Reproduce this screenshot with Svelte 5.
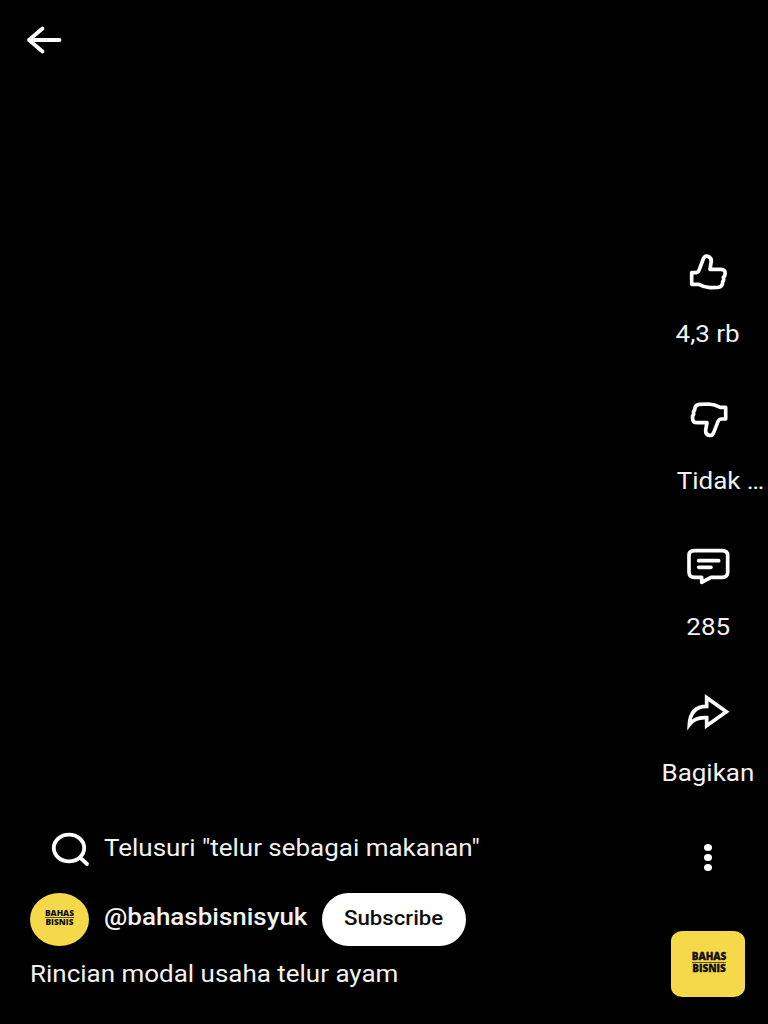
<script lang="ts">
    type IconName = "like" | "dislike" | "comment" | "share";

    const actions: { icon: IconName, label: string, viewBox: string }[] = [
        { icon: "like", label: "4,3 rb", viewBox: "72 30 144 132" },
        { icon: "dislike", label: "Tidak …", viewBox: "72 21 144 132" },
        { icon: "comment", label: "285", viewBox: "72 24 144 132" },
        { icon: "share", label: "Bagikan", viewBox: "102 30 144 132" },
    ];

    const paths: Record<IconName, string> = {
        like: "M95 98H108Q114 98 117 91L131 54Q135 46 143 49Q157 54 153 69L150 88H183Q197 89 195 101Q196 108 190 112Q193 120 188 125Q188 141 174 142L150 143Q131 141 116 133H95Z",
        dislike: "M197 52H181Q164 43 146 42L118 43Q104 45 104 60Q99 64 101 73Q96 78 98 87Q98 98 112 98H141L137 120Q136 135 149 136Q156 138 160 130L174 95Q177 87 184 87H197Z",
        comment: "M103 47H187Q203 47 203 62V111Q203 127 187 127H153L125 142V127H103Q87 127 87 111V62Q87 47 103 47Z",
        share: "M170 53V79C138 79 120 98 118 134C130 118 146 111 170 113V137L229 95Z",
    };
</script>

<main class="player">
    <header>
        <button class="back" aria-label="Kembali">
            <svg width="40" height="32" viewBox="0 0 40 32">
                <path d="M18.5 4.5L5 16L18.5 27.5M5 16H35.5" />
            </svg>
        </button>
    </header>

    <section class="info">
        <a class="search" href="#search">
            <svg width="42" height="38" viewBox="0 0 42 38">
                <ellipse cx="18" cy="16" rx="15.2" ry="13.4" />
                <path d="M29 25.5L36 32" />
            </svg>
            <span class="wide">Telusuri "telur sebagai makanan"</span>
        </a>
        <div class="channel">
            <div class="avatar"><span>BAHAS</span><span>BISNIS</span></div>
            <span class="wide handle">@bahasbisnisyuk</span>
            <button class="subscribe"><span class="wide">Subscribe</span></button>
        </div>
        <p class="title"><span class="wide">Rincian modal usaha telur ayam</span></p>
    </section>

    <aside>
        {#each actions as action}
        <button class="action {action.icon}">
            <svg width="48" height="44" viewBox={action.viewBox}>
                <path d={paths[action.icon]} />
                {#if action.icon == "comment"}
                <path d="M116 77H176M116 97H153" />
                {/if}
            </svg>
            <span class="label wide">{action.label}</span>
        </button>
        {/each}
        <button class="more" aria-label="Lainnya">
            <i></i><i></i><i></i>
        </button>
        <div class="sound"><span>BAHAS</span><span>BISNIS</span></div>
    </aside>
</main>

<style>
    :global(body) {
        margin: 0;
        background: #000;
    }

    .player {
        width: 768px;
        height: 1024px;
        box-sizing: border-box;
        overflow: hidden;
        display: grid;
        grid-template-columns: 648px 120px;
        grid-template-rows: 250px 1fr;
        background: #000;
        color: #f1f1f1;
        font-family: Roboto, sans-serif;
        font-size: 24px;
        line-height: 28px;
    }

    header {
        grid-column: span 2;
        padding: 24px 0 0 24px;
    }

    button {
        padding: 0;
        border: 0;
        background: none;
        color: inherit;
        font: inherit;
    }

    svg {
        display: block;
        flex: none;
        fill: none;
        stroke: #fff;
        stroke-width: 3.8;
        stroke-linecap: round;
        stroke-linejoin: round;
    }

    /* the whole interface is wider than it is tall, text included */
    .wide {
        display: inline-block;
        white-space: nowrap;
        transform: scaleX(1.082);
        transform-origin: left center;
    }

    .info {
        display: flex;
        flex-direction: column;
        justify-content: flex-end;
        padding: 0 0 36px 30px;
    }

    .search {
        display: flex;
        align-items: center;
        gap: 11px;
        height: 38px;
        margin-bottom: 23px;
        padding-left: 21px;
        color: inherit;
        text-decoration: none;
    }

    .search .wide {
        padding-bottom: 6px;
    }

    .channel {
        display: flex;
        align-items: center;
        height: 53px;
    }

    .avatar,
    .sound {
        box-sizing: border-box;
        display: flex;
        flex-direction: column;
        align-items: center;
        justify-content: center;
        background: #f5d94b;
        color: #111;
        font-family: "Open Sans", sans-serif;
        font-weight: 800;
    }

    .avatar {
        width: 59px;
        height: 53px;
        margin-right: 15px;
        padding-bottom: 4px;
        border-radius: 50%;
        font-size: 8.4px;
        line-height: 8px;
    }

    .avatar span:first-child,
    .sound span:first-child {
        border-bottom: 1px solid #5d5320;
    }

    .handle {
        width: 218px;
        padding-bottom: 5px;
        font-weight: 500;
    }

    .subscribe {
        width: 144px;
        height: 53px;
        border-radius: 27px;
        background: #fff;
        color: #0f0f0f;
        font-size: 20px;
        font-weight: 500;
    }

    .subscribe .wide,
    .label {
        transform-origin: center;
    }

    .subscribe .wide {
        padding-bottom: 3px;
        transform: scaleX(1.11);
    }

    .title {
        margin: 14px 0 0;
    }

    aside {
        display: flex;
        flex-direction: column;
        align-items: center;
    }

    .action {
        display: flex;
        flex-direction: column;
        align-items: center;
        gap: 26px;
        height: 146.5px;
    }

    .action svg {
        stroke-width: 11;
    }

    .share {
        gap: 25px;
    }

    .share svg {
        stroke-linejoin: miter;
    }

    .dislike .label {
        margin-right: -24px;
    }

    .more {
        display: flex;
        flex-direction: column;
        gap: 3px;
        margin-top: 8px;
    }

    .more i {
        width: 8px;
        height: 7px;
        border-radius: 50%;
        background: #fff;
    }

    .sound {
        width: 74px;
        height: 66px;
        margin-top: 60px;
        padding: 0 0 3px 2px;
        border-radius: 11px / 10px;
        font-size: 10px;
        line-height: 10px;
        -webkit-text-stroke: 0.3px #111;
    }

    .sound span:first-child {
        padding-bottom: 1px;
        line-height: 9px;
    }
</style>
